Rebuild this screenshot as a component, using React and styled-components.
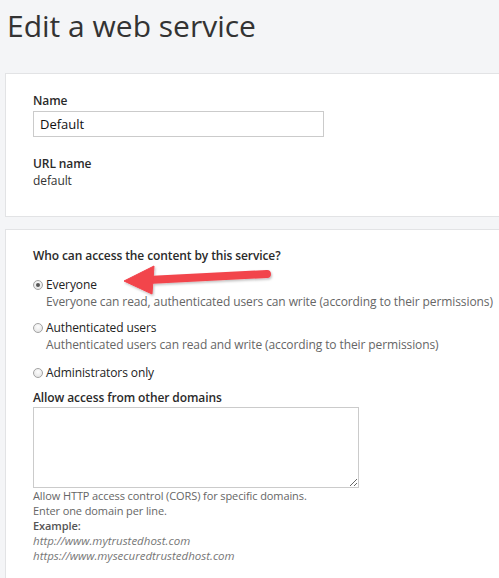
import styled, { createGlobalStyle } from "styled-components";

const GlobalStyle = createGlobalStyle`
  html, body {
    margin: 0;
    padding: 0;
    background: #f4f5f7;
    overflow: hidden;
  }
  body {
    font-family: "Open Sans", "DejaVu Sans", sans-serif;
    color: #333;
  }
`;

const Page = styled.div`
  position: relative;
  padding: 6px 0 0 5px;
`;

const Title = styled.h1`
  margin: 0 0 27px 2px;
  font-size: 30px;
  line-height: 40px;
  font-weight: 400;
  color: #333;
`;

const Card = styled.section`
  background: #fff;
  border: 1px solid #e2e3e5;
  margin-right: -20px;
  margin-bottom: ${(p) => p.$gap || 0}px;
  padding: ${(p) => p.$pad || "18px 0 27px 27px"};
  letter-spacing: -0.1px;
`;

const Label = styled.label`
  display: block;
  font-size: 12px;
  line-height: 17px;
  font-weight: 600;
  color: #2a2a2a;
  margin-top: ${(p) => p.$top || 0}px;
  margin-bottom: ${(p) => p.$bottom || 0}px;
`;

const TextInput = styled.input`
  display: block;
  box-sizing: border-box;
  width: 291px;
  height: 26px;
  margin: 0;
  padding: 0 6px;
  border: 1px solid #cbcbcb;
  font-family: inherit;
  font-size: 13px;
  letter-spacing: 0;
  color: #111;
  outline: none;
`;

const Value = styled.div`
  font-size: 12px;
  line-height: 17px;
  color: #333;
`;

const Option = styled.div`
  margin-top: ${(p) => p.$top || 0}px;
`;

const OptionRow = styled.div`
  display: flex;
  align-items: center;
  font-size: 12px;
  line-height: 17px;
  color: #222;
`;

const Radio = styled.span`
  box-sizing: border-box;
  width: 10px;
  height: 10px;
  margin: 0 3px 0 0;
  border-radius: 50%;
  border: 1px solid #a3a3a3;
  background: radial-gradient(circle at 50% 35%, #fdfdfd, #e0e0e0);
  display: flex;
  align-items: center;
  justify-content: center;
  &::after {
    content: "";
    display: ${(p) => (p.$checked ? "block" : "none")};
    width: 4px;
    height: 4px;
    border-radius: 50%;
    background: #555;
  }
`;

const OptionDesc = styled.div`
  padding-left: 13px;
  font-size: 12px;
  line-height: 17px;
  color: #666;
`;

const TextArea = styled.textarea`
  display: block;
  box-sizing: border-box;
  width: 326px;
  height: 81px;
  margin: 0;
  border: 1px solid #cbcbcb;
  font-family: inherit;
  font-size: 12px;
  outline: none;
  resize: both;
`;

const Help = styled.div`
  font-size: 11px;
  line-height: 15px;
  color: #666;
`;

const HelpStrong = styled.div`
  font-weight: 600;
  color: #555;
`;

const HelpUrl = styled.div`
  font-style: italic;
  font-size: 11.5px;
  letter-spacing: 0;
  color: #777;
`;

const Arrow = styled.svg`
  position: absolute;
  left: 0;
  top: 0;
  pointer-events: none;
`;

const options = [
  {
    id: "everyone",
    label: "Everyone",
    desc: "Everyone can read, authenticated users can write (according to their permissions)",
    checked: true,
    top: 12,
  },
  {
    id: "auth",
    label: "Authenticated users",
    desc: "Authenticated users can read and write (according to their permissions)",
    top: 9,
  },
  { id: "admin", label: "Administrators only", top: 11 },
];

export default function App() {
  return (
    <>
      <GlobalStyle />
      <Page>
        <Title>Edit a web service</Title>

        <Card $gap={12}>
          <Label $bottom={2}>Name</Label>
          <TextInput defaultValue="Default" />
          <Label $top={18}>URL name</Label>
          <Value>default</Value>
        </Card>

        <Card $pad="17px 0 40px 27px">
          <Label>Who can access the content by this service?</Label>
          {options.map((o) => (
            <Option key={o.id} $top={o.top}>
              <OptionRow>
                <Radio $checked={o.checked} />
                {o.label}
              </OptionRow>
              {o.desc && <OptionDesc>{o.desc}</OptionDesc>}
            </Option>
          ))}
          <Label $top={8} $bottom={1}>Allow access from other domains</Label>
          <TextArea />
          <Help>
            <div>Allow HTTP access control (CORS) for specific domains.</div>
            <div>Enter one domain per line.</div>
            <HelpStrong>Example:</HelpStrong>
            <HelpUrl>http://www.mytrustedhost.com</HelpUrl>
            <HelpUrl>https://www.mysecuredtrustedhost.com</HelpUrl>
          </Help>
        </Card>

        <Arrow width="499" height="578" viewBox="0 0 499 578">
          <defs>
            <filter id="sh" x="-10%" y="-30%" width="120%" height="160%">
              <feDropShadow dx="1" dy="1.5" stdDeviation="1.2" floodColor="#000" floodOpacity="0.25" />
            </filter>
          </defs>
          <g filter="url(#sh)" fill="#f2444c" stroke="#f2444c">
            <line x1="267" y1="274" x2="148" y2="280" strokeWidth="8" strokeLinecap="round" />
            <polygon points="124,281 154,266 152,294" strokeWidth="1" strokeLinejoin="round" />
          </g>
        </Arrow>
      </Page>
    </>
  );
}
